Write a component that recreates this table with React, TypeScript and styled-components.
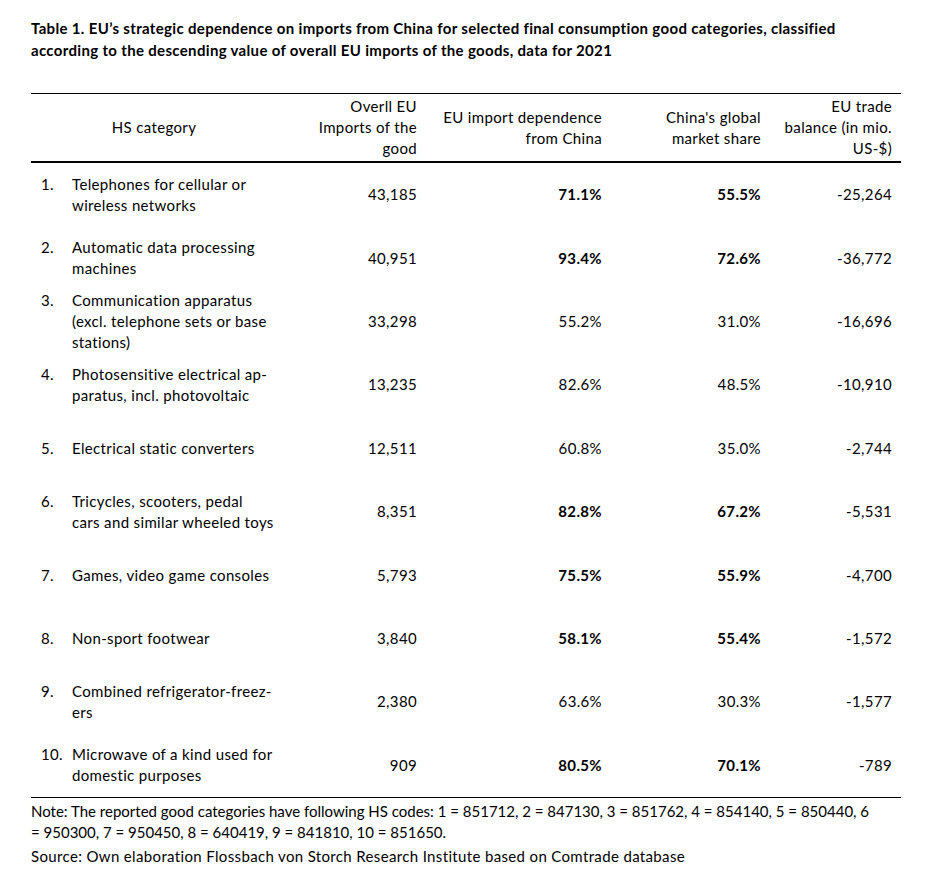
import React from 'react';
import styled, { createGlobalStyle } from 'styled-components';

const Global = createGlobalStyle`
  html, body { margin: 0; padding: 0; background: #fff; }
  body {
    font-family: Lato, "Open Sans", "Liberation Sans", sans-serif;
    color: #000;
    font-size: 15px;
    letter-spacing: 0.35px;
  }
`;

const Page = styled.div`
  width: 937px;
  height: 884px;
  box-sizing: border-box;
  padding: 17px 20px 0 31px;
`;

const Title = styled.h1`
  margin: 0;
  font-size: 15px;
  font-weight: 700;
  line-height: 22px;
  letter-spacing: 0.33px;
  white-space: nowrap;
`;

const Table = styled.div`
  margin-top: 32px;
  width: 870px;
  border-top: 1px solid #000;
  border-bottom: 1px solid #000;
`;

const cols = '252px 143px 185px 159px 131px';

const HeadRow = styled.div`
  display: grid;
  grid-template-columns: ${cols};
  height: 67px;
  border-bottom: 2px solid #000;
`;

const HeadCell = styled.div<{ $center?: boolean }>`
  display: flex;
  align-items: center;
  justify-content: ${(p) => (p.$center ? 'center' : 'flex-end')};
  text-align: ${(p) => (p.$center ? 'center' : 'right')};
  padding-right: ${(p) => (p.$center ? '6px' : '9px')};
  line-height: 21px;
  white-space: nowrap;
`;

const Row = styled.div`
  display: grid;
  grid-template-columns: ${cols};
  height: 63.4px;
`;

const CatCell = styled.div`
  display: flex;
  align-items: center;
  padding-left: 10px;
  line-height: 21px;
`;

const CatBlock = styled.div`
  display: flex;
  align-items: flex-start;
`;

const Num = styled.div`
  width: 31px;
  flex: none;
`;

const CatText = styled.div`
  white-space: nowrap;
`;

const NumCell = styled.div<{ $bold?: boolean }>`
  display: flex;
  align-items: center;
  justify-content: flex-end;
  padding-right: 9px;
  line-height: 21px;
  font-weight: ${(p) => (p.$bold ? 700 : 400)};
`;

const Note = styled.p`
  margin: 3px 0 0;
  line-height: 21px;
  letter-spacing: 0;
  white-space: nowrap;
`;

const Source = styled.p`
  margin: 3px 0 0;
  line-height: 21px;
  white-space: nowrap;
`;

type R = { n: string; lines: string[]; imp: string; dep: string; share: string; bal: string; bold: boolean };

const rows: R[] = [
  { n: '1.', lines: ['Telephones for cellular or', 'wireless networks'], imp: '43,185', dep: '71.1%', share: '55.5%', bal: '-25,264', bold: true },
  { n: '2.', lines: ['Automatic data processing', 'machines'], imp: '40,951', dep: '93.4%', share: '72.6%', bal: '-36,772', bold: true },
  { n: '3.', lines: ['Communication apparatus', '(excl. telephone sets or base', 'stations)'], imp: '33,298', dep: '55.2%', share: '31.0%', bal: '-16,696', bold: false },
  { n: '4.', lines: ['Photosensitive electrical ap-', 'paratus, incl. photovoltaic'], imp: '13,235', dep: '82.6%', share: '48.5%', bal: '-10,910', bold: false },
  { n: '5.', lines: ['Electrical static converters'], imp: '12,511', dep: '60.8%', share: '35.0%', bal: '-2,744', bold: false },
  { n: '6.', lines: ['Tricycles, scooters, pedal', 'cars and similar wheeled toys'], imp: '8,351', dep: '82.8%', share: '67.2%', bal: '-5,531', bold: true },
  { n: '7.', lines: ['Games, video game consoles'], imp: '5,793', dep: '75.5%', share: '55.9%', bal: '-4,700', bold: true },
  { n: '8.', lines: ['Non-sport footwear'], imp: '3,840', dep: '58.1%', share: '55.4%', bal: '-1,572', bold: true },
  { n: '9.', lines: ['Combined refrigerator-freez-', 'ers'], imp: '2,380', dep: '63.6%', share: '30.3%', bal: '-1,577', bold: false },
  { n: '10.', lines: ['Microwave of a kind used for', 'domestic purposes'], imp: '909', dep: '80.5%', share: '70.1%', bal: '-789', bold: true },
];

const multi = (lines: string[]) =>
  lines.map((l, i) => (
    <React.Fragment key={i}>
      {i > 0 && <br />}
      {l}
    </React.Fragment>
  ));

export default function App() {
  return (
    <Page>
      <Global />
      <Title>
        Table 1. EU’s strategic dependence on imports from China for selected final consumption good categories, classified
        <br />
        according to the descending value of overall EU imports of the goods, data for 2021
      </Title>
      <Table>
        <HeadRow>
          <HeadCell $center>HS category</HeadCell>
          <HeadCell>{multi(['Overll EU', 'Imports of the', 'good'])}</HeadCell>
          <HeadCell>{multi(['EU import dependence', 'from China'])}</HeadCell>
          <HeadCell>{multi(["China's global", 'market share'])}</HeadCell>
          <HeadCell>{multi(['EU trade', 'balance (in mio.', 'US-$)'])}</HeadCell>
        </HeadRow>
        {rows.map((r) => (
          <Row key={r.n}>
            <CatCell>
              <CatBlock>
                <Num>{r.n}</Num>
                <CatText>{multi(r.lines)}</CatText>
              </CatBlock>
            </CatCell>
            <NumCell>{r.imp}</NumCell>
            <NumCell $bold={r.bold}>{r.dep}</NumCell>
            <NumCell $bold={r.bold}>{r.share}</NumCell>
            <NumCell>{r.bal}</NumCell>
          </Row>
        ))}
      </Table>
      <Note>
        Note: The reported good categories have following HS codes: 1 = 851712, 2 = 847130, 3 = 851762, 4 = 854140, 5 = 850440, 6
        <br />= 950300, 7 = 950450, 8 = 640419, 9 = 841810, 10 = 851650.
      </Note>
      <Source>Source: Own elaboration Flossbach von Storch Research Institute based on Comtrade database</Source>
    </Page>
  );
}
